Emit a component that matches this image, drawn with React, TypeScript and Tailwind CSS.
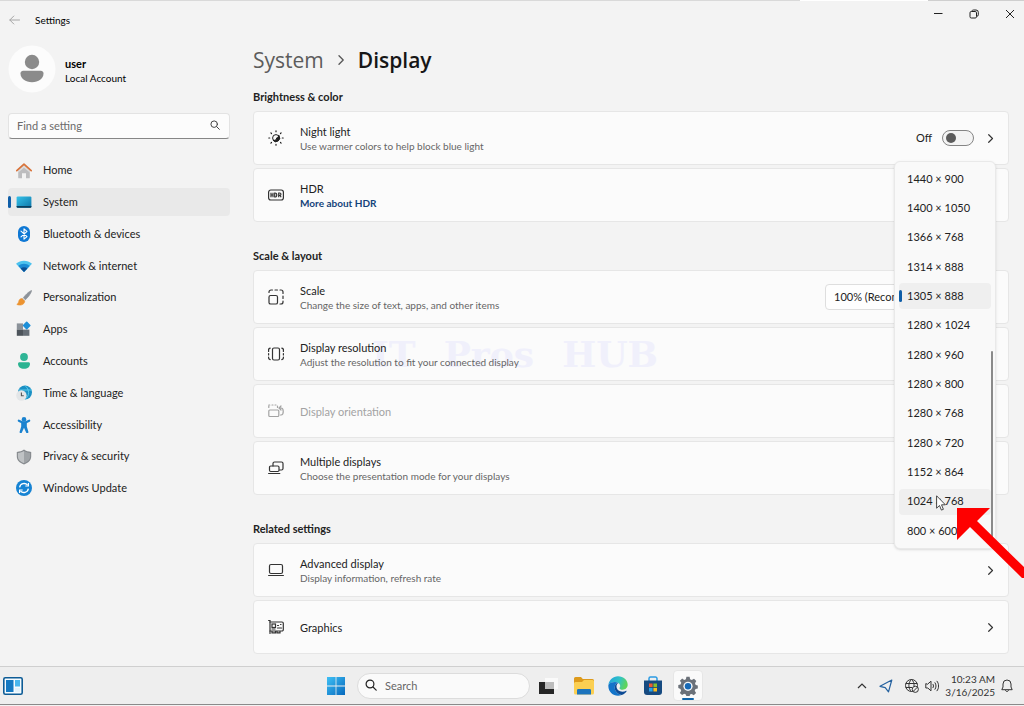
import React, { useState } from 'react';

type IconProps = { className?: string };

const HomeIcon = () => (
  <svg viewBox="0 0 16 16" className="size-4 shrink-0">
    <path d="M2.2 7.2 8 2l5.8 5.2v7.2a.9.9 0 0 1-.9.9H10v-5H6v5H3.1a.9.9 0 0 1-.9-.9z" fill="#bdbdbf" />
    <path d="M2.2 7.4 8 2.4l5.8 5v2L8 4.8 2.2 9.4z" fill="#dcdcdc" />
    <path d="M.8 7.6 8 1.2l7.2 6.4" fill="none" stroke="#d9733a" strokeWidth="1.7" strokeLinecap="round" strokeLinejoin="round" />
  </svg>
);

const SystemIcon = () => (
  <svg viewBox="0 0 16 16" className="size-4 shrink-0">
    <defs>
      <linearGradient id="sys" x1="0" y1="0" x2="1" y2="1">
        <stop offset="0" stopColor="#35c3ea" />
        <stop offset="1" stopColor="#0d75a8" />
      </linearGradient>
    </defs>
    <rect x=".6" y="2.4" width="14.8" height="11.4" rx="1.2" fill="url(#sys)" />
    <path d="M.6 12h14.8v.7a1.1 1.1 0 0 1-1.1 1.1H1.7a1.1 1.1 0 0 1-1.1-1.1z" fill="#0b3f5e" />
  </svg>
);

const BluetoothIcon = () => (
  <svg viewBox="0 0 16 16" className="size-4 shrink-0">
    <rect x="2" y="0" width="12" height="16" rx="6" fill="#0f78d4" />
    <path d="m5 5.2 6 5.4-3 2.6V2.8l3 2.6-6 5.4" fill="none" stroke="#fff" strokeWidth="1.1" strokeLinejoin="round" strokeLinecap="round" />
  </svg>
);

const NetworkIcon = () => (
  <svg viewBox="0 0 16 16" className="size-4 shrink-0">
    <path d="M0 5.8C4.6 1.6 11.4 1.6 16 5.8L8 14z" fill="#4cc2ee" />
    <path d="M2.3 8C5.5 5 10.5 5 13.7 8L8 14z" fill="#1a8ad4" />
    <path d="M4.6 10.4C6.5 8.8 9.5 8.8 11.4 10.4L8 14z" fill="#0b4f94" />
  </svg>
);

const BrushIcon = () => (
  <svg viewBox="0 0 16 16" className="size-4 shrink-0">
    <path d="M15.6.5c-2.6.7-7 5.2-8.9 8.2l1.8 1.7C11.5 8.3 15.2 3.4 15.6.5z" fill="#8c9299" stroke="#8c9299" strokeWidth=".7" />
    <path d="M6.3 8.4c-2 0-3.3 1.2-3.6 3.2-.2 1.4-.8 2.2-1.9 2.8 2.9 1.5 7.8.8 8-3.6z" fill="#ec9330" stroke="#ec9330" strokeWidth=".6" />
    <path d="m6.3 8.4 2.5 2.4.5-1L7.3 7.7z" fill="#d5d8da" />
  </svg>
);

const AppsIcon = () => (
  <svg viewBox="0 0 16 16" className="size-4 shrink-0">
    <path d="M.8 2.4H7v6.2H.8z" fill="#8b9299" />
    <path d="M.8 8.6H7v6.2H.8z" fill="#4d545b" />
    <path d="M7 8.6h6.4v6.2H7z" fill="#666e76" />
    <rect x="7.7" y="1.5" width="6" height="6" rx=".8" transform="rotate(45 10.7 4.5)" fill="#1d8fd8" />
  </svg>
);

const AccountsIcon = () => (
  <svg viewBox="0 0 16 16" className="size-4 shrink-0">
    <circle cx="8" cy="4" r="3.9" fill="#2fb596" />
    <path d="M2 10.8c0-.9.7-1.5 1.5-1.5h9c.8 0 1.5.6 1.5 1.5 0 3-2.4 5-6 5s-6-2-6-5z" fill="#2bb391" />
  </svg>
);

const TimeIcon = () => (
  <svg viewBox="0 0 16 16" className="size-4 shrink-0">
    <circle cx="9" cy="7.5" r="7" fill="#1b90c4" />
    <path d="M9 .6c2.5 2 3.6 4.5 3.6 7S11.5 12.5 9 14.5M3 5h13" fill="none" stroke="#5dd0ee" strokeWidth=".9" />
    <circle cx="5.4" cy="10.5" r="5.2" fill="#e3e6e8" />
    <path d="M5.4 7.5v3.3h2.4" fill="none" stroke="#555" strokeWidth="1.1" />
  </svg>
);

const AccessibilityIcon = () => (
  <svg viewBox="0 0 16 16" className="size-4 shrink-0">
    <circle cx="8" cy="2.4" r="2.3" fill="#1a82cf" />
    <path d="M2.8 3.7 6.3 5.3h3.4l3.5-1.6" fill="none" stroke="#1a82cf" strokeWidth="2.2" strokeLinecap="round" />
    <path d="M5.2 5h5.6v4.4l1.5 5.2a1.1 1.1 0 0 1-2.2.8L8 10.8l-2.1 4.6a1.1 1.1 0 0 1-2.2-.8l1.5-5.2z" fill="#1a82cf" />
  </svg>
);

const ShieldIcon = () => (
  <svg viewBox="0 0 16 16" className="size-4 shrink-0">
    <path d="M8 .6c2 1.5 4.3 2.2 7.2 2.3v4.6c0 3.8-2.7 6.3-7.2 8C3.5 13.8.8 11.3.8 7.5V2.9C3.7 2.8 6 2.1 8 .6z" fill="#85898d" />
    <path d="M8 2c1.8 1.2 3.7 1.8 6.1 2v3.5c0 3.2-2.3 5.3-6.1 6.8z" fill="#9fa3a6" />
    <path d="M8 2C6.2 3.2 4.3 3.8 1.9 4v3.5c0 3.2 2.3 5.3 6.1 6.8z" fill="#bfc2c4" />
  </svg>
);

const UpdateIcon = () => (
  <svg viewBox="0 0 16 16" className="size-4 shrink-0">
    <circle cx="8" cy="8" r="8" fill="#1683d3" />
    <path d="M3.6 7.3a4.6 4.6 0 0 1 8-2.2M12.4 8.7a4.6 4.6 0 0 1-8 2.2" fill="none" stroke="#fff" strokeWidth="1.3" />
    <path d="M12.4 3v3H9.3M3.6 13v-3h3.1" fill="none" stroke="#fff" strokeWidth="1.2" />
  </svg>
);

const SearchIcon = ({ className }: IconProps) => (
  <svg viewBox="0 0 12 12" className={className} fill="none" stroke="currentColor" strokeWidth="1.2" strokeLinecap="round">
    <circle cx="5" cy="5" r="3.9" />
    <path d="m8 8 3.2 3.2" />
  </svg>
);

const ChevronRight = ({ className }: IconProps) => (
  <svg viewBox="0 0 10 10" className={className} fill="none" stroke="currentColor" strokeWidth="1.3" strokeLinecap="round" strokeLinejoin="round">
    <path d="m3 .8 4.2 4.2L3 9.2" />
  </svg>
);

const lineIcon = 'size-4 shrink-0';

const NightIcon = () => (
  <svg viewBox="0 0 16 16" className={lineIcon} fill="none" stroke="#222" strokeLinecap="round">
    <circle cx="8" cy="8" r="3.4" />
    <path d="M10.9 5.6A3.6 3.6 0 1 1 5 10.2c2 .5 3.6-.4 3.7-2.3.6-.1 1.7-.9 2.2-2.3z" fill="#222" />
    <path d="M8 .8v.9M8 14.3v.9M.8 8h.9M14.3 8h.9M2.9 2.9l.6.6M12.5 12.5l.6.6M2.9 13.1l.6-.6M12.5 3.5l.6-.6" strokeWidth="1.2" />
  </svg>
);

const HdrIcon = () => (
  <svg viewBox="0 0 16 16" className={lineIcon} fill="none" stroke="#333" strokeWidth="1.2">
    <rect x=".6" y="3" width="14.8" height="10" rx="2.2" />
    <path d="M3 5.8v4.4M5 5.8v4.4M3 8h2M6.7 6v4h.5a1.5 1.5 0 0 0 1.5-1.5v-1A1.5 1.5 0 0 0 7.2 6zM10.7 10.2V6h1.1a1.1 1.1 0 0 1 0 2.3h-1.1M12 8.3l1.1 1.9" />
  </svg>
);

const ScaleIcon = () => (
  <svg viewBox="0 0 16 16" className={lineIcon} fill="none" stroke="#333" strokeWidth="1.2" strokeLinecap="round">
    <rect x="1" y="6.5" width="8.5" height="8.5" rx="1.6" />
    <path d="M1 3.5V3a2 2 0 0 1 2-2h1.5M7 1h2.5M12 1h1a2 2 0 0 1 2 2v1.5M15 7v2.5M15 12v1a2 2 0 0 1-2 2h-1" />
  </svg>
);

const ResolutionIcon = () => (
  <svg viewBox="0 0 16 16" className={lineIcon} fill="none" stroke="#333" strokeWidth="1.2" strokeLinecap="round">
    <rect x="4.5" y="2" width="7" height="12" rx="1.5" />
    <path d="M2.2 2.2A2 2 0 0 0 .6 4.5v1M.6 7.5V9M.6 11a2.3 2.3 0 0 0 1.6 2.6M13.8 2.2a2 2 0 0 1 1.6 2.3v1M15.4 7.5V9M15.4 11a2.3 2.3 0 0 1-1.6 2.6" />
  </svg>
);

const OrientationIcon = () => (
  <svg viewBox="0 0 16 16" className={lineIcon} fill="none" stroke="#a3a3a3" strokeWidth="1.2" strokeLinecap="round">
    <rect x=".8" y="7" width="10" height="6.5" rx="1" />
    <path d="M.8 4.5V3M.8 2h1M4 2h1M7 2h1M9.5 3v1.5M12.5 12h.5c3 0 3-7 0-7h-1.500M13 3l-2 2 2 2" />
  </svg>
);

const MultipleIcon = () => (
  <svg viewBox="0 0 16 16" className={lineIcon} fill="none" stroke="#333" strokeWidth="1.2" strokeLinecap="round">
    <path d="M5 6V3.5A1.5 1.5 0 0 1 6.5 2h7A1.5 1.5 0 0 1 15 3.5v5a1.5 1.5 0 0 1-1.5 1.5h-2" />
    <rect x="1.5" y="6" width="9.5" height="5.5" rx="1.2" />
    <path d="M.6 13.5h11.2" />
  </svg>
);

const LaptopIcon = () => (
  <svg viewBox="0 0 16 16" className={lineIcon} fill="none" stroke="#333" strokeWidth="1.2" strokeLinecap="round">
    <rect x="1.5" y="2.5" width="13" height="9" rx="1.5" />
    <path d="M.6 13.5h14.8" />
  </svg>
);

const GraphicsIcon = () => (
  <svg viewBox="0 0 16 16" className={lineIcon} fill="none" stroke="#333" strokeWidth="1.2" strokeLinecap="round">
    <path d="M.6 1.500H2v13" />
    <path d="M2 3h12a1.3 1.3 0 0 1 1.3 1.3v6.4A1.3 1.3 0 0 1 14 12H2M4 12v1.8h3.5V12M9 12v1.8h3V12" />
    <rect x="4" y="5" width="3.5" height="3.5" />
    <path d="M9.5 6.5h1M12.5 5.5h.5M9.5 9h4M4 10h3" />
  </svg>
);

const navItems = [
  { label: 'Home', icon: <HomeIcon /> },
  { label: 'System', icon: <SystemIcon /> },
  { label: 'Bluetooth & devices', icon: <BluetoothIcon /> },
  { label: 'Network & internet', icon: <NetworkIcon /> },
  { label: 'Personalization', icon: <BrushIcon /> },
  { label: 'Apps', icon: <AppsIcon /> },
  { label: 'Accounts', icon: <AccountsIcon /> },
  { label: 'Time & language', icon: <TimeIcon /> },
  { label: 'Accessibility', icon: <AccessibilityIcon /> },
  { label: 'Privacy & security', icon: <ShieldIcon /> },
  { label: 'Windows Update', icon: <UpdateIcon /> },
];

const resolutions = [
  '1440 × 900', '1400 × 1050', '1366 × 768', '1314 × 888', '1305 × 888',
  '1280 × 1024', '1280 × 960', '1280 × 800', '1280 × 768', '1280 × 720',
  '1152 × 864', '1024 × 768', '800 × 600',
];

type CardProps = {
  icon: React.ReactNode;
  title: string;
  subtitle?: React.ReactNode;
  disabled?: boolean;
  children?: React.ReactNode;
};

function Card({ icon, title, subtitle, disabled, children }: CardProps) {
  return (
    <div className="relative flex h-[54px] items-center gap-4 rounded-sm border border-[#e6e6e6] bg-[#fbfbfb] pr-3 pl-[14px]">
      {icon}
      <div className="relative z-10 flex-1 pt-0.5">
        <div className={disabled ? 'text-[11px] leading-[14px] text-[#a3a3a3]' : 'text-[11px] leading-[14px]'}>{title}</div>
        {subtitle && <div className="text-[10px] leading-[14px] text-[#666]">{subtitle}</div>}
      </div>
      {children}
    </div>
  );
}

function Section({ title, children }: { title: string; children: React.ReactNode }) {
  return (
    <section>
      <h2 className="mb-1 text-[11px] leading-5 font-bold">{title}</h2>
      <div className="flex flex-col gap-[3px]">{children}</div>
    </section>
  );
}

function ResolutionMenu() {
  const [selected, setSelected] = useState('1305 × 888');

  return (
    <div className="absolute -top-[167px] right-3 z-20 w-[102px] rounded-md border border-[#e9e9e9] bg-[#f9f9f9] p-1 shadow-sm">
      <div role="listbox" aria-label="Display resolution" className="flex h-[378px] flex-col justify-between">
        {resolutions.map((item) => (
          <button
            key={item}
            type="button"
            role="option"
            aria-selected={item === selected}
            onClick={() => setSelected(item)}
            className={`relative flex h-[26px] items-center rounded-sm pl-2 text-[11px] whitespace-nowrap ${
              item === selected || item === '1024 × 768' ? 'bg-[#efefef]' : ''
            }`}
          >
            {item === selected && <span className="absolute left-0 h-3 w-[3px] rounded-full bg-[#0f5ea8]" />}
            {item}
          </button>
        ))}
      </div>
      <div className="absolute right-[2px] bottom-[10px] h-[187px] w-[2px] rounded-full bg-[#8a8a8a]" />
      <svg viewBox="0 0 10 16" className="absolute top-[333px] left-[41px] h-4 w-[10px]">
        <path d="M.6.8v12.4l2.900-2.7 1.9 4.6 2-.8-1.9-4.5h3.9z" fill="#fff" stroke="#333" strokeWidth=".9" />
      </svg>
      <svg viewBox="0 0 67 70" className="absolute top-[346px] left-[62px] h-[70px] w-[67px]">
        <path d="M0 0h33L20 13l47 46v11h-2L13 19 0 32z" fill="#fe0000" />
      </svg>
    </div>
  );
}

function Sidebar() {
  return (
    <aside className="w-[222px] shrink-0">
      <div className="flex items-center gap-[9px]">
        <svg viewBox="0 0 48 48" className="size-12">
          <circle cx="24" cy="24" r="23.5" fill="#fcfcfc" />
          <circle cx="24" cy="17" r="7.2" fill="#8b8b8b" />
          <path d="M12.5 28.5c0-1.7 1.2-2.7 2.7-2.7h17.6c1.5 0 2.7 1 2.7 2.7 0 5.3-5 8.7-11.5 8.7s-11.5-3.4-11.5-8.7z" fill="#8b8b8b" />
        </svg>
        <div className="pt-1 text-[10px] leading-[14px] text-black">
          <div className="text-[11px] font-bold">user</div>
          <div>Local Account</div>
        </div>
      </div>
      <div className="relative mt-[19px]">
        <input
          type="text"
          aria-label="Find a setting"
          placeholder="Find a setting"
          className="h-[26px] w-full rounded-sm border border-[#e3e3e3] border-b-[#868686] bg-[#fcfcfc] px-2 text-[11px] placeholder:text-[#6b6b6b]"
        />
        <SearchIcon className="absolute top-2 right-[10px] size-[10px] text-[#444]" />
      </div>
      <nav className="mt-[18px] flex h-[346px] flex-col justify-between">
        {navItems.map(({ label, icon }) => (
          <a
            key={label}
            href="#"
            className={`relative flex h-7 items-center gap-[11px] rounded-sm pl-2 text-[11px] ${
              label === 'System' ? 'bg-[#e9e9e9]' : ''
            }`}
          >
            {label === 'System' && <span className="absolute left-0 h-3 w-[3px] rounded-full bg-[#0f5ea8]" />}
            {icon}
            {label}
          </a>
        ))}
      </nav>
    </aside>
  );
}

function DisplaySettings() {
  const [nightLight, setNightLight] = useState(false);

  return (
    <main className="min-w-0 flex-1">
      <h1 className="flex h-[30px] items-center font-['Open_Sans',sans-serif] text-[21px] leading-8 font-semibold text-[#161616]">
        <a href="#" className="font-medium text-[#5c5c5c]">System</a>
        <ChevronRight className="mx-3 size-[10px] text-[#555]" />
        Display
      </h1>
      <div className="mt-3 flex flex-col gap-6">
        <Section title="Brightness & color">
          <Card icon={<NightIcon />} title="Night light" subtitle="Use warmer colors to help block blue light">
            <label className="flex items-center gap-[10px] text-[11px]">
              {nightLight ? 'On' : 'Off'}
              <input
                type="checkbox"
                role="switch"
                checked={nightLight}
                onChange={(event) => setNightLight(event.currentTarget.checked)}
                className="peer sr-only"
              />
              <span className="flex h-4 w-8 items-center rounded-full border border-[#858585] bg-[#f4f4f4] px-[3px] peer-checked:justify-end">
                <span className="size-[10px] rounded-full bg-[#5c5c5c]" />
              </span>
            </label>
            <ChevronRight className="mr-px -ml-1 size-[9px] text-[#333]" />
          </Card>
          <Card
            icon={<HdrIcon />}
            title="HDR"
            subtitle={<a href="#" className="font-bold text-[#13437a]">More about HDR</a>}
          />
        </Section>

        <Section title="Scale & layout">
          <Card icon={<ScaleIcon />} title="Scale" subtitle="Change the size of text, apps, and other items">
            <select
              aria-label="Scale"
              className="h-[26px] w-[171px] appearance-none rounded-sm border border-[#dedede] bg-[#fefefe] px-2 text-[11px]"
            >
              <option>100% (Recommended)</option>
            </select>
          </Card>
          <Card
            icon={<ResolutionIcon />}
            title="Display resolution"
            subtitle="Adjust the resolution to fit your connected display"
          >
            <div className="absolute top-1/2 left-[118px] flex w-[286px] -translate-y-1/2 justify-between font-['DejaVu_Serif',serif] text-[36px] leading-10 font-bold text-[#f0f0fb]">
              <span>IT</span>
              <span>Pros</span>
              <span>HUB</span>
            </div>
            <ResolutionMenu />
          </Card>
          <Card icon={<OrientationIcon />} title="Display orientation" disabled />
          <Card
            icon={<MultipleIcon />}
            title="Multiple displays"
            subtitle="Choose the presentation mode for your displays"
          />
        </Section>

        <Section title="Related settings">
          <Card icon={<LaptopIcon />} title="Advanced display" subtitle="Display information, refresh rate">
            <ChevronRight className="mr-px size-[9px] text-[#333]" />
          </Card>
          <Card icon={<GraphicsIcon />} title="Graphics">
            <ChevronRight className="mr-px size-[9px] text-[#333]" />
          </Card>
        </Section>
      </div>
    </main>
  );
}

function Taskbar() {
  return (
    <footer className="flex h-[39px] shrink-0 items-center border-t border-b border-t-[#cfcfcf] border-b-[#8a8a8a] bg-[#eeeeee] pl-[3px]">
      <div className="flex flex-1">
        <button type="button" aria-label="Widgets">
          <svg viewBox="0 0 20 18" className="h-[18px] w-5">
            <rect x=".8" y=".8" width="18.4" height="16.4" rx="1.5" fill="#f4fbff" stroke="#0e5c96" strokeWidth="1.6" />
            <path d="M3 3h7.5v12H3z" fill="#1579c2" />
            <path d="M12 3h5v6.500h-5z" fill="#49b7ee" />
            <path d="M12 11h5v4h-5z" fill="#e3f2fb" />
          </svg>
        </button>
      </div>

      <div className="flex items-center pl-[3px]">
        <button type="button" aria-label="Start">
          <svg viewBox="0 0 18 18" className="size-[18px]">
            <defs>
              <linearGradient id="win" x1="0" y1="0" x2="1" y2="1">
                <stop offset="0" stopColor="#3fc0f5" />
                <stop offset="1" stopColor="#0668bd" />
              </linearGradient>
            </defs>
            <path d="M0 0h8.600v8.600H0zM9.400 0H18v8.600H9.400zM0 9.400h8.600V18H0zM9.400 9.400H18V18H9.400z" fill="url(#win)" />
          </svg>
        </button>
        <div className="relative ml-3">
          <SearchIcon className="absolute top-[7px] left-2 size-3 text-[#222]" />
          <input
            type="text"
            aria-label="Search"
            placeholder="Search"
            className="h-[26px] w-[173px] rounded-full border border-[#dcdcdc] bg-[#fafafa] pr-2 pl-[27px] text-[11px] placeholder:text-[#666]"
          />
        </div>
        <button type="button" aria-label="Task view" className="ml-[9px]">
          <svg viewBox="0 0 20 18" className="h-[18px] w-5">
            <path d="M6 1h13v11H6z" fill="#fafafa" />
            <path d="M0 5h15v12H0z" fill="#262626" />
            <path d="M6 5h9v7H6z" fill="#bdbdbd" />
          </svg>
        </button>
        <button type="button" aria-label="File Explorer" className="ml-[15px]">
          <svg viewBox="0 0 20 18" className="h-[18px] w-5">
            <path d="M0 1.500A1.500 1.500 0 0 1 1.500 0H7l1.800 2H18.500A1.500 1.500 0 0 1 20 3.500V8H0z" fill="#dd9a1c" />
            <path d="M0 6.500A1.500 1.500 0 0 1 1.500 5H8l2-2h8.500A1.500 1.500 0 0 1 20 4.500V16a1.500 1.500 0 0 1-1.500 1.500h-17A1.500 1.500 0 0 1 0 16z" fill="#fbcf52" />
            <path d="M3 17.500v-4.200A1.300 1.300 0 0 1 4.300 12h11.400a1.300 1.300 0 0 1 1.300 1.300v4.200z" fill="#1c74bd" />
          </svg>
        </button>
        <button type="button" aria-label="Edge" className="ml-[14px]">
          <svg viewBox="0 0 20 20" className="size-5">
            <defs>
              <linearGradient id="edge" x1="0" y1="0" x2="1" y2=".3">
                <stop offset="0" stopColor="#1f9fe0" />
                <stop offset=".6" stopColor="#31c3c5" />
                <stop offset="1" stopColor="#5fd45a" />
              </linearGradient>
            </defs>
            <path d="M.4 9C1 3.900 5.100.3 10 .3c5.600 0 9.700 3.900 9.700 8.500 0 3-2.300 4.900-5 4.900-2 0-3.200-.7-3.200-1.500 0-.6.700-.9.700-2.200C12.200 7.700 10 6 7 6 3.600 6 1.200 7.400.4 9z" fill="url(#edge)" />
            <path d="M.4 9C1.200 7.300 3.600 6 7 6c1.400 0 2.600.4 3.500 1C8.300 6.900 6.700 9 6.700 11.500c0 3.800 3 6.500 6.800 7.500-1 .5-2.200.8-3.500.8C4.500 19.800-.2 15.200.4 9z" fill="#1374c9" />
            <path d="M6.700 11.500C6.700 9 8.300 7 10.500 7c-1.100.6-2 1.800-2 3.500 0 3 2.700 5.200 6 5.200 1.400 0 2.700-.3 3.600-.9.400-.2.700.1.500.5-1 1.700-2.800 3.200-5.100 3.700-3.800-1-6.800-3.700-6.800-7.500z" fill="#0c4a94" />
          </svg>
        </button>
        <button type="button" aria-label="Store" className="ml-[15px]">
          <svg viewBox="0 0 20 20" className="size-5">
            <path d="M6 5V2.500A1.500 1.500 0 0 1 7.500 1h5A1.500 1.500 0 0 1 14 2.500V5" fill="none" stroke="#2b9be3" strokeWidth="1.5" />
            <path d="M1 4.500h18V16a3 3 0 0 1-3 3H4a3 3 0 0 1-3-3z" fill="#164a80" />
            <path d="M6 7.500h3.600v3.600H6z" fill="#ee5a32" />
            <path d="M10.400 7.500H14v3.600h-3.600z" fill="#86bf2a" />
            <path d="M6 11.900h3.600v3.600H6z" fill="#2aa3e8" />
            <path d="M10.400 11.900H14v3.600h-3.600z" fill="#fcba1f" />
          </svg>
        </button>
        <button
          type="button"
          aria-label="Settings"
          className="relative ml-[10px] flex h-[31px] w-[30px] items-center justify-center rounded-sm border border-[#e6e6e6] bg-[#fafafa]"
        >
          <svg viewBox="0 0 20 20" className="size-5">
            <path d="M8.400.8h3.200l.5 2.500 1.700.8L16 2.800l2.300 2.300-1.300 2.100.7 1.700 2.100.6v3l-2.300.5-.8 1.700 1.400 2.200-2.300 2.300-2.100-1.300-1.700.7-.4 1.900H8.400l-.5-2-1.700-.7-2.100 1.300-2.300-2.200 1.400-2.200-.7-1.700L.3 12V9l2.200-.5.8-1.700-1.400-2.100L4.200 2.500l2 1.400 1.700-.7z" fill="#6b7179" />
            <circle cx="10" cy="10.300" r="4.600" fill="#f2f6fa" />
            <circle cx="10" cy="10.300" r="3.200" fill="#1769b5" />
          </svg>
          <span className="absolute bottom-0 h-[2px] w-3 rounded-full bg-[#0f64a8]" />
        </button>
      </div>

      <div className="flex flex-1 items-center justify-end text-[#333]">
        <button type="button" aria-label="Show hidden icons">
          <svg viewBox="0 0 10 10" className="size-[10px]" fill="none" stroke="currentColor" strokeWidth="1.2">
            <path d="m1 7 4-4 4 4" />
          </svg>
        </button>
        <svg viewBox="0 0 14 14" className="ml-3 size-[14px]" fill="none" stroke="#24619f" strokeWidth="1.2" strokeLinejoin="round">
          <path d="M12.800 1 1 7.300l5.200 1.300 3.300 4.200z" />
        </svg>
        <svg viewBox="0 0 14 14" className="ml-3 size-[14px]" fill="none" stroke="currentColor">
          <circle cx="6.500" cy="6.500" r="6" />
          <path d="M.7 4.500h11.600M.7 8.500H7M6.500.5c-3.500 3-3.500 9 0 12M6.500.5C8.500 2 9.300 4.500 9 7" />
          <circle cx="10.300" cy="10.300" r="3.100" fill="#eee" />
          <path d="m8.200 12.400 4.200-4.200" />
        </svg>
        <svg viewBox="0 0 14 14" className="ml-[6px] size-[14px]" fill="none" stroke="currentColor" strokeLinejoin="round" strokeLinecap="round">
          <path d="M.8 5v4h2L6 11.800V2.200L2.800 5zM8 5.300c.7 1 .7 2.400 0 3.400M10 3.700c1.400 1.800 1.400 4.800 0 6.600M12 2.200c2.200 2.600 2.200 7 0 9.600" />
        </svg>
        <div className="ml-[6px] text-right text-[10px] leading-[13px]">
          <div>10:23 AM</div>
          <div>3/16/2025</div>
        </div>
        <svg viewBox="0 0 12 14" className="mr-[11px] ml-[6px] h-[14px] w-3" fill="none" stroke="currentColor" strokeLinejoin="round">
          <path d="M6 1a4 4 0 0 0-4 4v3L.8 10.700h10.400L10 8V5a4 4 0 0 0-4-4zM4.500 11c.2 2 2.800 2 3 0" />
        </svg>
      </div>
    </footer>
  );
}

export default function App() {
  return (
    <div className="flex min-h-screen flex-col overflow-hidden bg-[#f3f3f3] pb-px font-[Lato,sans-serif] text-[#222]">
      <div className="flex h-px bg-[#d9d9d9]">
        <div className="ml-auto w-1/8 bg-white" />
        <div className="w-24 bg-[#cfcfcf]" />
      </div>
      <header className="flex h-9 items-start">
        <button type="button" aria-label="Back" className="mt-[14px] ml-[9px]">
          <svg viewBox="0 0 11 10" className="h-[10px] w-[11px]" fill="none" stroke="#a6a6a6" strokeLinecap="round">
            <path d="M10.500 5H.8M4.800 1 .8 5l4 4" />
          </svg>
        </button>
        <span className="mt-3 ml-[15px] text-[10px] leading-[14px] text-black">Settings</span>
        <div className="mt-2 mr-[9px] ml-auto flex gap-[26px] text-[#222]">
          <button type="button" aria-label="Minimize">
            <svg viewBox="0 0 10 10" className="size-[10px]" fill="none" stroke="currentColor">
              <path d="M1 4.500h8.500" />
            </svg>
          </button>
          <button type="button" aria-label="Restore">
            <svg viewBox="0 0 10 10" className="size-[10px]" fill="none" stroke="currentColor">
              <rect x="1" y="2.500" width="6.500" height="6.500" rx="1.300" />
              <path d="M3 2.300C3 1.300 3.600 1 4.500 1H7a2.300 2.300 0 0 1 2.300 2.300v2.500c0 .9-.5 1.500-1.500 1.500" />
            </svg>
          </button>
          <button type="button" aria-label="Close">
            <svg viewBox="0 0 10 10" className="size-[10px]" fill="none" stroke="currentColor">
              <path d="m1 1 8 8M9 1 1 9" />
            </svg>
          </button>
        </div>
      </header>
      <div className="flex flex-1 gap-[23px] pt-2 pr-[15px] pb-3 pl-2">
        <Sidebar />
        <DisplaySettings />
      </div>
      <Taskbar />
    </div>
  );
}
